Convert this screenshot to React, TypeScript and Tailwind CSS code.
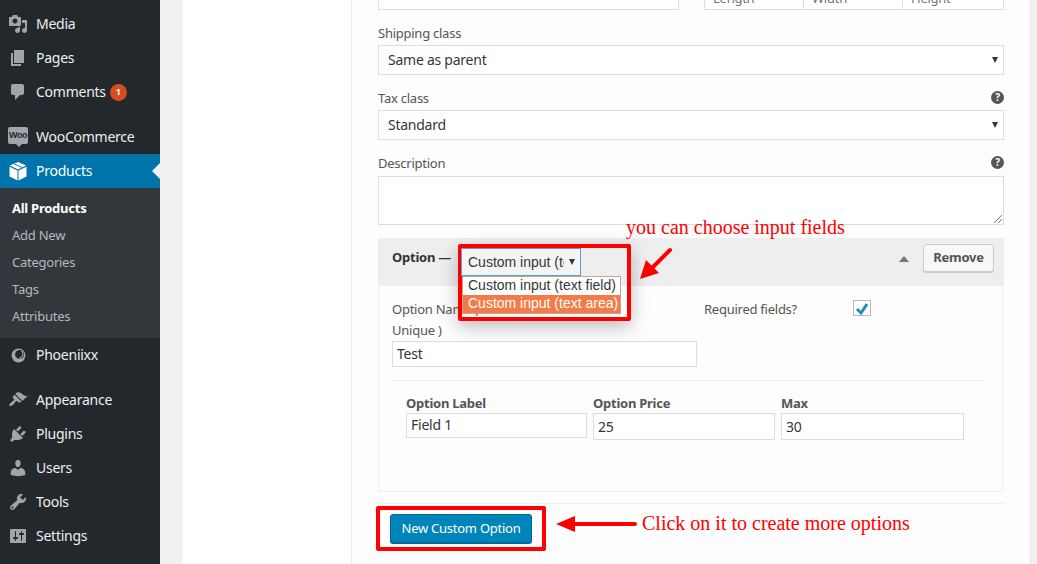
/**
 * WooCommerce product option editor inside wp-admin, with red tutorial callouts.
 */
import type { ReactNode } from "react";

const UI_FONT = "font-['Noto_Sans',sans-serif] tracking-[-0.25px]";

function DashIcon({ d }: { d: string }) {
  return (
    <svg viewBox="0 0 20 20" className="h-5 w-5 fill-[#a0a5aa]">
      <path d={d} />
    </svg>
  );
}

const mediaPath =
  "M13 11V4c0-.55-.45-1-1-1h-1.67L9 1H5L3.67 3H2c-.55 0-1 .45-1 1v7c0 .55.45 1 1 1h10c.55 0 1-.45 1-1zM7 4.5c1.38 0 2.5 1.12 2.5 2.5S8.38 9.5 7 9.5 4.5 8.38 4.5 7 5.62 4.5 7 4.5zM14 6h5v10.5c0 1.38-1.12 2.5-2.5 2.5S14 17.88 14 16.5s1.12-2.5 2.5-2.5c.17 0 .34.02.5.05V9h-3V6zm-4 8.05V13h2v3.5c0 1.38-1.12 2.5-2.5 2.5S7 17.88 7 16.5 8.12 14 9.5 14c.17 0 .34.02.5.05z";
const pagesPath = "M6 15V2h10v13H6zm-1 1h8v2H3V5h2v11z";
const commentsPath =
  "M5 2h9c1.1 0 2 .9 2 2v7c0 1.1-.9 2-2 2h-2l-5 5v-5H5c-1.1 0-2-.9-2-2V4c0-1.1.9-2 2-2z";
const appearancePath =
  "M14.48 11.06L7.41 3.99l1.5-1.5c.5-.56 2.3-.47 3.51.32 1.21.8 1.43 1.28 2.91 2.1 1.18.64 2.45 1.26 4.45.85zm-.71.71L6.7 4.7 4.93 6.47c-.39.39-.39 1.02 0 1.41l1.06 1.06c.39.39.39 1.03 0 1.42-.6.6-1.43 1.11-2.21 1.69-.35.26-.7.53-1.01.84C1.43 13.71.96 15.12 1.54 15.7c.58.58 1.99.11 3.8-1.24.31-.31.58-.66.85-1.01.57-.78 1.08-1.61 1.69-2.21.39-.39 1.02-.39 1.41 0l1.06 1.06c.39.39 1.02.39 1.41 0z";
const pluginsPath =
  "M13.11 4.36L9.87 7.6 8 5.73l3.24-3.24c.35-.34 1.05-.2 1.56.32.52.51.66 1.21.31 1.55zm-8 1.77l.91-1.12 9.01 9.01-1.19.84c-.71.71-2.63 1.16-3.82 1.16H6.14L4.9 17.26c-.59.59-1.54.59-2.12 0-.59-.58-.59-1.53 0-2.12l1.24-1.24v-3.88c0-1.13.4-3.19 1.09-3.89zm7.26 3.97l3.24-3.24c.34-.35 1.04-.21 1.55.31.52.51.66 1.21.31 1.55l-3.24 3.25z";
const usersPath =
  "M10 9.25c-2.27 0-2.73-3.44-2.73-3.44C7 4.02 7.82 2 9.97 2c2.16 0 2.98 2.02 2.71 3.81 0 0-.41 3.44-2.68 3.44zm0 2.57L12.72 10c2.39 0 4.52 2.33 4.52 4.53v2.49s-3.65 1.13-7.24 1.13c-3.65 0-7.24-1.13-7.24-1.13v-2.49c0-2.25 1.94-4.48 4.47-4.48z";
const toolsPath =
  "M16.68 9.77c-1.34 1.34-3.3 1.67-4.95.99l-5.41 6.52c-.99.99-2.59.99-3.58 0s-.99-2.59 0-3.57l6.52-5.42c-.68-1.65-.35-3.61.99-4.95 1.28-1.28 3.12-1.62 4.72-1.06l-2.89 2.89 2.82 2.82 2.86-2.87c.53 1.58.18 3.39-1.08 4.65zM3.81 16.21c.4.39 1.04.39 1.43 0 .4-.4.4-1.04 0-1.43-.39-.4-1.03-.4-1.43 0-.39.39-.39 1.03 0 1.43z";
const settingsPath =
  "M18 16V4c0-.55-.45-1-1-1H3c-.55 0-1 .45-1 1v12c0 .55.45 1 1 1h14c.55 0 1-.45 1-1zM8 11h1c.55 0 1 .45 1 1s-.45 1-1 1H8v1.5c0 .28-.22.5-.5.5s-.5-.22-.5-.5V13H6c-.55 0-1-.45-1-1s.45-1 1-1h1V5.500c0-.28.22-.5.5-.5s.5.22.5.5V11zm5-2h-1c-.55 0-1-.45-1-1s.45-1 1-1h1V5.500c0-.28.22-.5.5-.5s.5.22.5.5V7h1c.55 0 1 .45 1 1s-.45 1-1 1h-1v5.500c0 .28-.22.5-.5.5s-.5-.22-.5-.5V9z";

function WooIcon() {
  return (
    <div className="relative -mt-[3px] flex h-[17px] w-5 items-center justify-center rounded-[2px] bg-[#a0a5aa] font-['Liberation_Sans',sans-serif] text-[9px] font-bold tracking-[-0.5px] text-[#23282d]">
      Woo
      <span className="absolute -bottom-[3px] left-[8px] h-0 w-0 border-x-[3px] border-t-[3px] border-x-transparent border-t-[#a0a5aa]" />
    </div>
  );
}

function BoxIcon() {
  return (
    <svg viewBox="0 0 20 20" className="h-5 w-5 fill-white">
      <path d="M10 1 18.200 4.600 10 8.400 1.800 4.600z" />
      <path d="M6 2.900 14 6.500" stroke="#0073aa" strokeWidth="0.9" />
      <path d="M1.500 5.800 9.500 9.500V19.500L1.500 15.600zM18.500 5.800V15.600L10.500 19.500V9.500z" />
    </svg>
  );
}

function PhoenixIcon() {
  return (
    <svg viewBox="0 0 20 20" className="h-[15px] w-[15px]">
      <circle cx="10" cy="10" r="9.200" fill="#a0a5aa" />
      <circle cx="11.500" cy="8.500" r="6" fill="#23282d" />
      <path d="M14 3.500c3.500 3 2.500 8.500-3 10.500" fill="none" stroke="#a0a5aa" strokeWidth="1.600" />
    </svg>
  );
}

function MenuRow({ icon, label, badge }: { icon: ReactNode; label: string; badge?: string }) {
  return (
    <div className="flex h-[34px] items-center text-[14px] text-[#eeeeee]">
      <span className="flex w-9 shrink-0 justify-center">{icon}</span>
      <span className="pb-[2px]">{label}</span>
      {badge && (
        <span className="ml-1 flex h-[17px] w-[17px] items-center justify-center rounded-full bg-[#d54e21] text-[9px] font-bold text-white">
          {badge}
        </span>
      )}
    </div>
  );
}

function Sidebar() {
  return (
    <aside className="flex w-[160px] shrink-0 flex-col bg-[#23282d] pt-[7px]">
      <MenuRow icon={<DashIcon d={mediaPath} />} label="Media" />
      <MenuRow icon={<DashIcon d={pagesPath} />} label="Pages" />
      <MenuRow icon={<DashIcon d={commentsPath} />} label="Comments" badge="1" />
      <div className="h-[11px]" />
      <MenuRow icon={<WooIcon />} label="WooCommerce" />
      <div className="relative flex h-[34px] items-center bg-[#0073aa] text-[14px] text-white">
        <span className="flex w-9 shrink-0 justify-center">
          <BoxIcon />
        </span>
        <span className="pb-[2px]">Products</span>
        <span className="absolute right-0 top-[9px] h-0 w-0 border-y-[8px] border-r-[8px] border-y-transparent border-r-[#f1f1f1]" />
      </div>
      <div className="flex flex-col bg-[#32373c] pb-2 pt-[7px] text-[13px] text-[#b4b9be]">
        <div className="flex h-[27px] items-center pl-3 font-bold text-white">All Products</div>
        <div className="flex h-[27px] items-center pl-3">Add New</div>
        <div className="flex h-[27px] items-center pl-3">Categories</div>
        <div className="flex h-[27px] items-center pl-3">Tags</div>
        <div className="flex h-[27px] items-center pl-3">Attributes</div>
      </div>
      <MenuRow icon={<PhoenixIcon />} label="Phoeniixx" />
      <div className="h-[11px]" />
      <MenuRow icon={<DashIcon d={appearancePath} />} label="Appearance" />
      <MenuRow icon={<DashIcon d={pluginsPath} />} label="Plugins" />
      <MenuRow icon={<DashIcon d={usersPath} />} label="Users" />
      <MenuRow icon={<DashIcon d={toolsPath} />} label="Tools" />
      <MenuRow icon={<DashIcon d={settingsPath} />} label="Settings" />
    </aside>
  );
}

function HelpIcon() {
  return (
    <span className="mb-[2px] flex h-[13px] w-[13px] items-center justify-center rounded-full bg-[#555555] text-[10px] font-bold leading-none text-white">
      ?
    </span>
  );
}

function FieldLabel({ text, help }: { text: string; help?: boolean }) {
  return (
    <div className="flex h-[18px] items-center justify-between text-[13px] text-[#555555]">
      <span className="pt-[2px]">{text}</span>
      {help && <HelpIcon />}
    </div>
  );
}

function SelectBox({ value }: { value: string }) {
  return (
    <div className="mt-[3px] flex h-[30px] items-center justify-between border border-[#dddddd] bg-white pl-[9px] pr-[5px] text-[14px] text-[#32373c]">
      <span className="pb-[2px]">{value}</span>
      <span className="h-0 w-0 border-x-[3px] border-t-[6px] border-x-transparent border-t-[#32373c]" />
    </div>
  );
}

function TextBox({ value, className }: { value: string; className: string }) {
  return (
    <input
      readOnly
      value={value}
      className={`border border-[#dddddd] bg-white px-1 text-[14px] text-[#32373c] outline-none ${className}`}
    />
  );
}

function OptionPanel() {
  return (
    <div className="mt-[13px]">
      <div className="flex h-12 items-start justify-between bg-[#eeeeee] pl-[14px] pr-[10px]">
        <span className="mt-[10px] text-[13px] font-bold leading-[18px] text-[#333333]">Option —</span>
        <div className="mt-[6px] flex items-center gap-[14px]">
          <span className="mt-[2px] h-0 w-0 border-x-[5px] border-b-[6px] border-x-transparent border-b-[#72777c]" />
          <button
            type="button"
            className="h-[28px] w-[71px] rounded-[3px] border border-[#cccccc] bg-[#f7f7f7] text-[13px] font-bold text-[#555555] shadow-[0_1px_0_#cccccc]"
          >
            Remove
          </button>
        </div>
      </div>
      <div className="mr-[1px] h-[206px] border border-t-0 border-[#eeeeee] px-[13px]">
        <div className="flex">
          <div className="w-[305px] pt-[13px] text-[13px] leading-[21px] text-[#555555]">
            <div>Option Name ( Must be</div>
            <div>Unique )</div>
            <TextBox value="Test" className="block h-[26px] w-[305px] pb-[2px]" />
          </div>
          <div className="ml-[7px] flex pt-[13px]">
            <span className="w-[149px] text-[13px] leading-[21px] text-[#555555]">Required fields?</span>
            <span className="relative mt-[1px] h-4 w-[18px] border border-[#b4b9be] bg-white">
              <svg viewBox="0 0 16 16" className="absolute left-0 top-0 h-4 w-4 fill-none stroke-[#1e8cbe] stroke-[3]">
                <path d="M3 8 7 12 13 3" />
              </svg>
            </span>
          </div>
        </div>
        <div className="mr-[6px] mt-[13px] border-t border-[#eeeeee]" />
        <div className="ml-[14px] mt-[14px] flex gap-[6px] text-[13px] font-bold text-[#555555]">
          <div className="flex w-[181px] flex-col">
            <span className="h-[18px] leading-[16px]">Option Label</span>
            <TextBox value="Field 1" className="h-[25px] w-[181px] pb-[2px] font-normal" />
          </div>
          <div className="flex w-[182px] flex-col">
            <span className="h-[18px] leading-[16px]">Option Price</span>
            <TextBox value="25" className="h-[27px] w-[182px] font-normal" />
          </div>
          <div className="flex w-[183px] flex-col">
            <span className="h-[18px] leading-[16px]">Max</span>
            <TextBox value="30" className="h-[27px] w-[183px] font-normal" />
          </div>
        </div>
      </div>
    </div>
  );
}

function Callouts() {
  return (
    <div className="tracking-normal">
      {/* dropdown opened over the option header */}
      <div className="absolute left-[458px] top-[244px] h-[77px] w-[173px] rounded-[2px] border-4 border-[#ff0000] shadow-[0_6px_18px_rgba(0,0,0,0.25)]" />
      <div className="absolute left-[461px] top-[248px] flex h-[28px] w-[120px] items-center justify-between border border-[#5b9dd9] bg-[#f4f4f4] pl-[6px] pr-[5px] font-['Liberation_Sans',sans-serif] text-[14px] text-[#32373c]">
        <span className="w-[96px] overflow-hidden whitespace-nowrap">Custom input (text field)</span>
        <span className="h-0 w-0 border-x-[3px] border-t-[6px] border-x-transparent border-t-[#32373c]" />
      </div>
      <div className="absolute left-[462px] top-[276px] w-[159px] border border-[#c9a48f] bg-white font-['Liberation_Sans',sans-serif] text-[14px]">
        <div className="h-[18px] pl-[5px] leading-[16px] text-[#32373c]">Custom input (text field)</div>
        <div className="h-[18px] bg-[#f27b47] pl-[5px] leading-[16px] text-white">Custom input (text area)</div>
      </div>
      <div className="absolute left-[626px] top-[214px] whitespace-nowrap font-['Liberation_Serif',serif] text-[20px] leading-[26px] text-[#ff0000]">
        you can choose input fields
      </div>
      <svg viewBox="0 0 40 40" className="absolute left-[636px] top-[243px] h-10 w-10">
        <path d="M34 7 14 27" stroke="#ff0000" strokeWidth="4" strokeLinecap="round" />
        <path d="M4 36 10 17 23 30z" fill="#ff0000" />
      </svg>

      {/* new option button callout */}
      <div className="absolute left-[376px] top-[506px] h-[45px] w-[170px] rounded-[2px] border-4 border-[#ff0000]" />
      <svg viewBox="0 0 84 20" className="absolute left-[555px] top-[514px] h-5 w-[84px]">
        <path d="M18 10H80" stroke="#ff0000" strokeWidth="4" strokeLinecap="round" />
        <path d="M1 10 20 2V18z" fill="#ff0000" />
      </svg>
      <div className="absolute left-[642px] top-[510px] whitespace-nowrap font-['Liberation_Serif',serif] text-[20px] leading-[26px] text-[#ff0000]">
        Click on it to create more options
      </div>
    </div>
  );
}

export default function App() {
  return (
    <div className={`relative flex h-[564px] w-[1037px] overflow-hidden bg-[#f1f1f1] ${UI_FONT}`}>
      <Sidebar />
      <main className="ml-[23px] flex h-full w-[848px] border-r border-[#e5e5e5] bg-white">
        <div className="w-[169px] shrink-0 border-r border-[#eeeeee]" />
        <div className="w-[678px] bg-[#fdfdfd] px-[26px]">
          <div className="-mt-[16px] flex justify-between">
            <div className="h-[26px] w-[301px] border border-[#dddddd] bg-white" />
            <div className="flex h-[26px] w-[300px] text-[13px] text-[#757575]">
              <div className="w-[100px] border border-[#dddddd] bg-white pl-2 leading-[26px]">Length</div>
              <div className="w-[99px] border border-l-0 border-[#dddddd] bg-white pl-2 leading-[26px]">Width</div>
              <div className="w-[101px] border border-l-0 border-[#dddddd] bg-white pl-2 leading-[26px]">Height</div>
            </div>
          </div>
          <div className="mt-[14px]">
            <FieldLabel text="Shipping class" />
            <SelectBox value="Same as parent" />
          </div>
          <div className="mt-[14px]">
            <FieldLabel text="Tax class" help />
            <SelectBox value="Standard" />
          </div>
          <div className="mt-[14px]">
            <FieldLabel text="Description" help />
            <div className="relative mt-1 h-[49px] border border-[#dddddd] bg-white">
              <svg viewBox="0 0 10 10" className="absolute bottom-0 right-0 h-[10px] w-[10px] stroke-[#777777]">
                <path d="M1 9 9 1M5 9 9 5" />
              </svg>
            </div>
          </div>
          <OptionPanel />
          <div className="mt-[11px] border-t border-[#eeeeee]" />
          <button
            type="button"
            className="ml-[12px] mt-[10px] h-[29px] w-[142px] rounded-[3px] border border-[#006799] bg-[#0085ba] text-[13px] text-white shadow-[0_1px_0_#006799]"
          >
            New Custom Option
          </button>
        </div>
      </main>
      <Callouts />
    </div>
  );
}
